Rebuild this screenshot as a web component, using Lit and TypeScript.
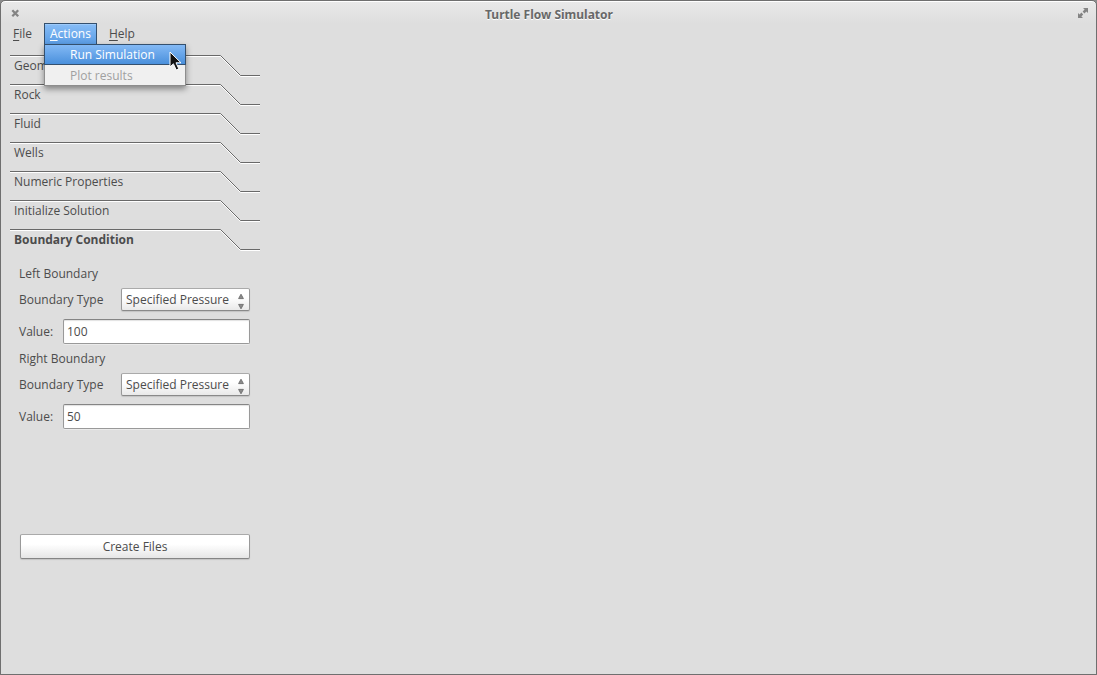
import { LitElement, html, css, svg } from "lit";
import { customElement, property } from "lit/decorators.js";

@customElement("tab-header")
class TabHeader extends LitElement {
  @property() label = "";
  @property({ type: Boolean }) active = false;

  static styles = css`
    :host { display: block; }
    button {
      display: flex;
      width: 100%;
      height: 22px;
      padding: 0;
      border: 0;
      background: none;
      color: #4c4c4c;
      font: inherit;
      text-align: left;
    }
    .label {
      flex: 1;
      padding-left: 4px;
      border-top: 1px solid #696969;
      box-shadow: inset 0 1px #fff;
      line-height: 20px;
      white-space: nowrap;
    }
    .active { font-weight: 700; }
    svg { display: block; flex: none; }
  `;

  render() {
    return html`<button type="button" aria-expanded=${this.active}>
      <span class="label ${this.active ? "active" : ""}">${this.label}</span>
      <svg width="40" height="22" viewBox="0 0 40 22" fill="none">
        <path d="M0 1.5H.5L20.5 21.5H40" stroke="#fff" />
        <path d="M0 .5H.5L20.5 20.5H40" stroke="#696969" />
      </svg>
    </button>`;
  }
}

@customElement("boundary-form")
class BoundaryForm extends LitElement {
  @property() heading = "";
  @property() value = "";

  static styles = css`
    :host { display: block; }
    fieldset { margin: 0; padding: 0; border: 0; min-width: 0; }
    legend { padding: 0; line-height: 20px; margin-bottom: 4px; }
    .row { display: flex; align-items: center; justify-content: space-between; }
    .row + .row { margin-top: 8px; }
    .value-label { width: 44px; flex: none; }
    .combo { display: grid; width: 129px; }
    .combo > * { grid-area: 1 / 1; }
    select, input {
      box-sizing: border-box;
      margin: 0;
      border: 1px solid #999;
      border-radius: 2px;
      color: #4c4c4c;
      font: inherit;
      outline: 0;
    }
    select {
      appearance: none;
      width: 100%;
      height: 23px;
      padding: 0 20px 0 4px;
      border-color: #aaa #999 #8a8a8a;
      background: linear-gradient(#fff 40%, #e9e9e9);
      box-shadow: 0 1px 1px #0000001f;
    }
    svg { justify-self: end; align-self: end; margin-right: 5px; pointer-events: none; }
    input {
      flex: 1;
      min-width: 0;
      height: 25px;
      padding: 0 3px;
      border-color: #858585 #999 #999;
      background: #fff;
      box-shadow: 0 1px #ebebeb, inset 0 1px 1px #0000001f;
    }
  `;

  render() {
    return html`<fieldset>
      <legend>${this.heading}</legend>
      <div class="row">
        <label for="type">Boundary Type</label>
        <span class="combo">
          <select id="type"><option>Specified Pressure</option></select>
          <svg width="8" height="18" viewBox="0 0 8 18" fill="#8c8c8c" stroke="#6c6c6c" stroke-width=".9">
            <path d="M4 1.2 6.4 5.6H1.6ZM4 15.8 6.4 11.4H1.6Z" />
          </svg>
        </span>
      </div>
      <div class="row">
        <label class="value-label" for="value">Value:</label>
        <input id="value" type="text" .value=${this.value} />
      </div>
    </fieldset>`;
  }
}

const closeIcon = svg`<svg width="9" height="9" viewBox="0 0 9 9">
  <path d="M1.3 1.3 7.2 7.2M7.2 1.3 1.3 7.2" stroke="#848484" stroke-width="2.3" />
</svg>`;

const expandIcon = svg`<svg width="10" height="10" viewBox="0 0 10 10">
  <path d="M5 0H10V5L8.4 3.4 6.4 5.4 4.6 3.6 6.6 1.6ZM0 5 1.6 6.6 3.4 4.6 5.2 6.4 3.4 8.4 5 10H0Z" fill="#848484" />
</svg>`;

@customElement("app-root")
class AppRoot extends LitElement {
  private tabs = ["Geometry", "Rock", "Fluid", "Wells", "Numeric Properties", "Initialize Solution", "Boundary Condition"];
  private current = "Boundary Condition";

  static styles = css`
    :host {
      display: block;
      background: #8b8b8b;
      color: #4c4c4c;
      font: 12px/18px "Open Sans", "Noto Sans", sans-serif;
    }
    .window {
      box-sizing: border-box;
      min-height: 100vh;
      border: 1px solid #6f6f6f;
      border-radius: 5px 5px 0 0;
      background: linear-gradient(#e9e9e9, #dedede 22px);
      box-shadow: inset 0 1px #fff;
    }
    .titlebar {
      display: flex;
      align-items: center;
      justify-content: space-between;
      height: 22px;
      padding: 2px 8px 0 10px;
      box-sizing: border-box;
    }
    .titlebar button { display: flex; padding: 0; border: 0; background: none; }
    h1 {
      margin: 0;
      color: #686868;
      font-family: "Noto Sans", sans-serif;
      font-size: 12px;
      line-height: 18px;
      padding-top: 4px;
      text-shadow: 0 1px #fff;
    }
    .menubar { display: flex; gap: 6px; padding-left: 6px; }
    .entry { position: relative; }
    .menubar button { margin: 0; font: inherit; color: inherit; text-align: left; }
    .entry > button {
      display: block;
      height: 21px;
      padding: 0 5px;
      border: 1px solid transparent;
      background: none;
      line-height: 19px;
    }
    .mnemonic { text-decoration: underline; text-underline-offset: 2px; text-decoration-thickness: 1px; }
    .entry > .open {
      padding-bottom: 1px;
      border-color: #34506e;
      border-bottom: 0;
      background: linear-gradient(#87bdf7, #5a9ce4);
      box-shadow: inset 0 1px #9dcafa;
      color: #fff;
    }
    .menu {
      position: absolute;
      z-index: 1;
      top: 100%;
      left: 0;
      width: 142px;
      box-sizing: border-box;
      border: 1px solid #8d8d8d;
      border-top: 0;
      background: #f0f0f0;
      box-shadow: 0 3px 6px #0000006b;
    }
    .menu button {
      display: block;
      width: 100%;
      height: 20px;
      padding: 0 25px;
      border: 0;
      background: none;
      line-height: 20px;
      white-space: nowrap;
    }
    .menu .hot {
      width: calc(100% + 2px);
      height: 21px;
      margin: 0 -1px;
      border: 1px solid #34506e;
      background: linear-gradient(#83b9f5, #4a90dc);
      line-height: 19px;
      color: #fff;
    }
    .menu button:disabled { padding-top: 1px; color: #a0a0a0; }
    .cursor { position: absolute; left: 124px; top: 7px; pointer-events: none; }
    .sidebar { width: 250px; padding: 11px 9px; }
    .tabs { display: grid; gap: 7px; }
    .panel { display: grid; gap: 5px; padding: 13px 10px 0 9px; }
    .create {
      height: 25px;
      margin: 100px 0 0 1px;
      padding: 0;
      border: 1px solid #999;
      border-color: #aaa #999 #858585;
      border-radius: 2px;
      background: linear-gradient(#fff 40%, #e6e6e6);
      box-shadow: 0 1px 1px #0000001f;
      color: inherit;
      font: inherit;
    }
  `;

  render() {
    return html`<div class="window">
      <header class="titlebar">
        <button type="button" aria-label="Close">${closeIcon}</button>
        <h1>Turtle Flow Simulator</h1>
        <button type="button" aria-label="Maximize">${expandIcon}</button>
      </header>
      <nav class="menubar">
        <div class="entry"><button type="button"><span class="mnemonic">F</span>ile</button></div>
        <div class="entry">
          <button type="button" class="open" aria-expanded="true"><span class="mnemonic">A</span>ctions</button>
          <div class="menu" role="menu">
            <button type="button" role="menuitem" class="hot">Run Simulation</button>
            <button type="button" role="menuitem" disabled>Plot results</button>
            <svg class="cursor" width="14" height="21" viewBox="0 0 14 21">
              <path d="M1 1V16L4.4 12.8 7.2 19 9.8 17.8 7 11.8H12Z" fill="#111" stroke="#fff" />
            </svg>
          </div>
        </div>
        <div class="entry"><button type="button"><span class="mnemonic">H</span>elp</button></div>
      </nav>
      <main class="sidebar">
        <div class="tabs">
          ${this.tabs.map((t) => html`<tab-header .label=${t} .active=${t === this.current}></tab-header>`)}
        </div>
        <section class="panel">
          <boundary-form .heading=${"Left Boundary"} .value=${"100"}></boundary-form>
          <boundary-form .heading=${"Right Boundary"} .value=${"50"}></boundary-form>
          <button type="button" class="create">Create Files</button>
        </section>
      </main>
    </div>`;
  }
}
